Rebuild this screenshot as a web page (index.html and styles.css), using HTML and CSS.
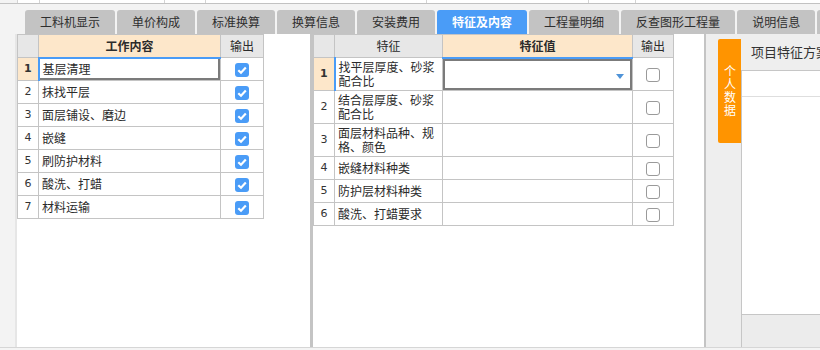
FILE: index.html
```html
<!DOCTYPE html>
<html lang="zh-CN">
<head>
    <meta charset="UTF-8">
    <title>特征及内容</title>
    <link rel="stylesheet" href="styles.css">
</head>
<body>
    <div class="topstrip">
        <span class="strip-cell w22"></span>
        <span class="strip-cell w125"></span>
        <span class="strip-cell w41"></span>
        <span class="strip-cell w221"></span>
        <span class="strip-cell w162"></span>
        <span class="strip-cell w47"></span>
        <span class="strip-cell w100"></span>
    </div>

    <nav class="tabs">
        <span class="tab">工料机显示</span>
        <span class="tab">单价构成</span>
        <span class="tab">标准换算</span>
        <span class="tab">换算信息</span>
        <span class="tab">安装费用</span>
        <span class="tab active">特征及内容</span>
        <span class="tab">工程量明细</span>
        <span class="tab">反查图形工程量</span>
        <span class="tab">说明信息</span>
        <span class="tab tab-more"></span>
    </nav>

    <div class="main">
        <div class="gutter"></div>

        <section class="pane pane-work">
            <table class="grid work-grid">
                <colgroup>
                    <col class="c-num">
                    <col class="c-work">
                    <col class="c-out">
                </colgroup>
                <thead>
                    <tr>
                        <th class="corner"></th>
                        <th class="hl-col">工作内容</th>
                        <th>输出</th>
                    </tr>
                </thead>
                <tbody>
                    <tr>
                        <td class="num hl-row">1</td>
                        <td class="cur cur-open">基层清理</td>
                        <td class="chk"><span class="box on"><svg viewBox="0 0 14 14"><path d="M3.3 7.2 L6 9.8 L10.8 4.6"/></svg></span></td>
                    </tr>
                    <tr>
                        <td class="num">2</td>
                        <td>抹找平层</td>
                        <td class="chk"><span class="box on"><svg viewBox="0 0 14 14"><path d="M3.3 7.2 L6 9.8 L10.8 4.6"/></svg></span></td>
                    </tr>
                    <tr>
                        <td class="num">3</td>
                        <td>面层铺设、磨边</td>
                        <td class="chk"><span class="box on"><svg viewBox="0 0 14 14"><path d="M3.3 7.2 L6 9.8 L10.8 4.6"/></svg></span></td>
                    </tr>
                    <tr>
                        <td class="num">4</td>
                        <td>嵌缝</td>
                        <td class="chk"><span class="box on"><svg viewBox="0 0 14 14"><path d="M3.3 7.2 L6 9.8 L10.8 4.6"/></svg></span></td>
                    </tr>
                    <tr>
                        <td class="num">5</td>
                        <td>刷防护材料</td>
                        <td class="chk"><span class="box on"><svg viewBox="0 0 14 14"><path d="M3.3 7.2 L6 9.8 L10.8 4.6"/></svg></span></td>
                    </tr>
                    <tr>
                        <td class="num">6</td>
                        <td>酸洗、打蜡</td>
                        <td class="chk"><span class="box on"><svg viewBox="0 0 14 14"><path d="M3.3 7.2 L6 9.8 L10.8 4.6"/></svg></span></td>
                    </tr>
                    <tr>
                        <td class="num">7</td>
                        <td>材料运输</td>
                        <td class="chk"><span class="box on"><svg viewBox="0 0 14 14"><path d="M3.3 7.2 L6 9.8 L10.8 4.6"/></svg></span></td>
                    </tr>
                </tbody>
            </table>
        </section>

        <div class="split"></div>

        <section class="pane pane-feature">
            <table class="grid feature-grid">
                <colgroup>
                    <col class="c-num">
                    <col class="c-feat">
                    <col class="c-val">
                    <col class="c-out2">
                </colgroup>
                <thead>
                    <tr>
                        <th class="corner"></th>
                        <th>特征</th>
                        <th class="hl-col">特征值</th>
                        <th>输出</th>
                    </tr>
                </thead>
                <tbody>
                    <tr class="tall">
                        <td class="num hl-row">1</td>
                        <td class="wrap">找平层厚度、砂浆配合比</td>
                        <td class="cur"><span class="drop"></span></td>
                        <td class="chk"><span class="box"></span></td>
                    </tr>
                    <tr class="tall">
                        <td class="num">2</td>
                        <td class="wrap">结合层厚度、砂浆配合比</td>
                        <td></td>
                        <td class="chk"><span class="box"></span></td>
                    </tr>
                    <tr class="tall">
                        <td class="num">3</td>
                        <td class="wrap">面层材料品种、规格、颜色</td>
                        <td></td>
                        <td class="chk"><span class="box"></span></td>
                    </tr>
                    <tr>
                        <td class="num">4</td>
                        <td>嵌缝材料种类</td>
                        <td></td>
                        <td class="chk"><span class="box"></span></td>
                    </tr>
                    <tr>
                        <td class="num">5</td>
                        <td>防护层材料种类</td>
                        <td></td>
                        <td class="chk"><span class="box"></span></td>
                    </tr>
                    <tr>
                        <td class="num">6</td>
                        <td>酸洗、打蜡要求</td>
                        <td></td>
                        <td class="chk"><span class="box"></span></td>
                    </tr>
                </tbody>
            </table>
        </section>

        <div class="split thin"></div>

        <aside class="side">
            <div class="side-tabs">
                <div class="side-tab">个人数据</div>
            </div>
            <div class="scheme">
                <div class="scheme-head">项目特征方案</div>
                <div class="scheme-body">
                    <div class="scheme-row"></div>
                </div>
                <div class="scheme-foot"></div>
            </div>
        </aside>
    </div>

    <div class="statusline"></div>
</body>
</html>
```

FILE: styles.css
```css
* {
    box-sizing: border-box;
}
body {
    margin: 0;
    width: 820px;
    height: 350px;
    overflow: hidden;
    background-color: #f3f3f3;
    font-family: "Noto Sans CJK SC", "Liberation Sans", sans-serif;
    font-size: 12px;
    color: #2b2b2b;
}

/* remains of the grid above */
.topstrip {
    display: flex;
    height: 4px;
    padding-left: 17px;
    border-bottom: 1px solid #c2c2c2;
    overflow: hidden;
}
.strip-cell {
    height: 3px;
    background-color: #fff;
    border-left: 1px solid #d4d4d4;
}
.w22 { width: 22px; }
.w125 { width: 125px; }
.w41 { width: 41px; }
.w221 { width: 221px; }
.w162 { width: 162px; }
.w47 { width: 47px; }
.w100 { flex: 1; }

/* tab bar */
.tabs {
    display: flex;
    align-items: flex-end;
    gap: 2px;
    height: 30px;
    padding-left: 25px;
    overflow: hidden;
    white-space: nowrap;
}
.tab {
    flex-shrink: 0;
    height: 24px;
    padding: 0 15px;
    line-height: 24px;
    font-size: 12px;
    color: #2e2e2e;
    background-color: #c3c3c3;
    border-radius: 3px 3px 0 0;
}
.tab.active {
    background-color: #4a9cf7;
    color: #fff;
    font-weight: bold;
}
.tab-more {
    width: 40px;
}

/* main area */
.main {
    display: flex;
    height: 313px;
}
.gutter {
    width: 17px;
    background-color: #f3f3f3;
    border-right: 2px solid #e6e6e6;
}
.pane {
    background-color: #fff;
}
.pane-work {
    width: 293px;
}
.pane-feature {
    width: 391px;
}
.split {
    width: 3px;
    background-color: #c4c4c4;
}
.split.thin {
    width: 2px;
}

/* grids */
.grid {
    border-collapse: collapse;
    table-layout: fixed;
}
.work-grid {
    width: 246px;
}
.feature-grid {
    width: 360px;
}
.c-num { width: 21px; }
.c-work { width: 182px; }
.c-out { width: 43px; }
.c-feat { width: 108px; }
.c-val { width: 190px; }
.c-out2 { width: 41px; }

.grid th, .grid td {
    border: 1px solid #c4c4c4;
    padding: 0 3px;
    height: 23px;
    line-height: 14px;
    font-weight: normal;
    overflow: hidden;
}
.grid th {
    background-color: #e7e7e7;
    text-align: center;
}
.grid th.hl-col {
    background-color: #fde7ca;
    font-weight: bold;
    border-bottom: 2px solid #4a9cf7;
}
.grid tr.tall td {
    height: 33px;
}
.grid td.num {
    padding: 0;
    text-align: center;
    font-family: "DejaVu Sans", sans-serif;
    font-size: 11px;
    color: #333;
}
.grid td.hl-row {
    background-color: #fde7ca;
    font-weight: bold;
    border-right: 2px solid #4a9cf7;
}
.grid td.wrap {
    word-break: break-all;
}
.grid td.cur {
    position: relative;
    box-shadow: inset 0 0 0 2px #7b7b7b;
}
.grid td.cur-open {
    box-shadow: inset -2px -2px 0 0 #7b7b7b;
}
.drop {
    position: absolute;
    right: 8px;
    top: 15px;
    width: 0;
    height: 0;
    border-left: 4px solid transparent;
    border-right: 4px solid transparent;
    border-top: 5px solid #4f93d8;
}

/* checkboxes */
.grid td.chk {
    padding: 0;
    text-align: center;
}
.box {
    display: inline-block;
    width: 14px;
    height: 14px;
    vertical-align: middle;
    border: 1px solid #9a9a9a;
    border-radius: 3px;
    background-color: #fff;
}
.box.on {
    border: none;
    background-color: #4a9cf7;
}
.box svg {
    display: block;
    width: 14px;
    height: 14px;
}
.box svg path {
    fill: none;
    stroke: #fff;
    stroke-width: 2.2;
}

/* right side panel */
.side {
    flex: 1;
    display: flex;
    background-color: #eee;
    overflow: hidden;
}
.side-tabs {
    width: 35px;
    padding: 5px 0 0 12px;
}
.side-tab {
    display: flex;
    align-items: center;
    justify-content: center;
    width: 23px;
    height: 104px;
    background-color: #ff9400;
    color: #fff;
    font-size: 12px;
    line-height: 14px;
    writing-mode: vertical-rl;
    text-orientation: upright;
    letter-spacing: 1px;
    border-radius: 2px 0 0 2px;
}
.scheme {
    flex: 1;
    display: flex;
    flex-direction: column;
    min-width: 0;
}
.scheme-head {
    height: 36px;
    padding-left: 10px;
    line-height: 36px;
    font-size: 13px;
    color: #333;
    white-space: nowrap;
}
.scheme-body {
    flex: 1;
    background-color: #fff;
    border-top: 1px solid #c6c6c6;
    border-left: 1px solid #c6c6c6;
}
.scheme-row {
    height: 26px;
    border-bottom: 1px solid #dedede;
}
.scheme-foot {
    height: 33px;
    background-color: #ececec;
    border-top: 1px solid #c6c6c6;
    border-left: 1px solid #c6c6c6;
}

.statusline {
    height: 3px;
    border-top: 1px solid #d6d6d6;
    background-color: #f4f4f4;
}
```
